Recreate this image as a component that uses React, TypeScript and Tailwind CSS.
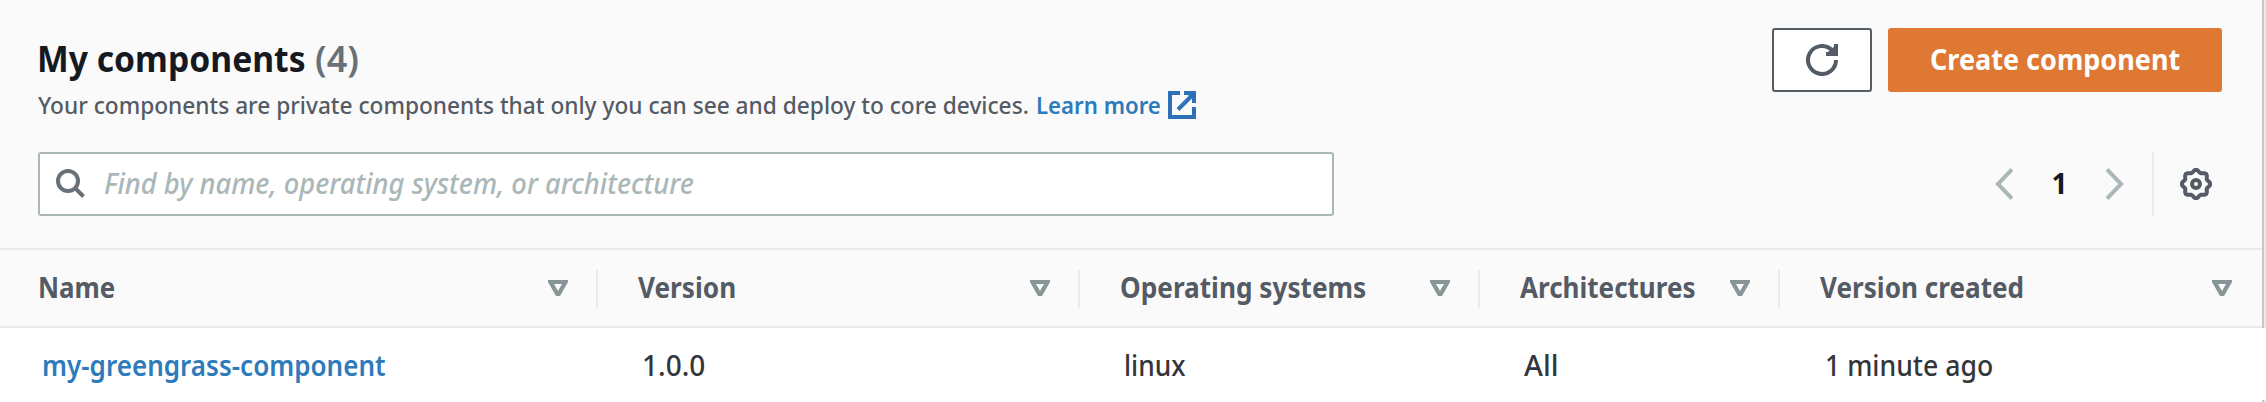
type Column = {
  label: string;
  value: string;
  cell: string;
  labelClass: string;
  valueClass: string;
  iconClass: string;
  last?: boolean;
};

const columns: Column[] = [
  {
    label: "Name",
    value: "my-greengrass-component",
    cell: "w-[598px]",
    labelClass: "ml-[38px] scale-x-[.925]",
    valueClass: "ml-[42px] scale-x-[.93] font-semibold text-[#2e7bbb]",
    iconClass: "mr-[28px]",
  },
  {
    label: "Version",
    value: "1.0.0",
    cell: "w-[482px]",
    labelClass: "ml-[40px] scale-x-[.935]",
    valueClass: "ml-[44px] font-medium text-[#33363b]",
    iconClass: "mr-[28px]",
  },
  {
    label: "Operating systems",
    value: "linux",
    cell: "w-[400px]",
    labelClass: "ml-[40px] scale-x-[.935]",
    valueClass: "ml-[44px] scale-x-[.94] font-medium text-[#33363b]",
    iconClass: "mr-[28px]",
  },
  {
    label: "Architectures",
    value: "All",
    cell: "w-[300px]",
    labelClass: "ml-[40px] scale-x-[.93]",
    valueClass: "ml-[44px] scale-x-[1.03] font-medium text-[#33363b]",
    iconClass: "mr-[28px]",
  },
  {
    label: "Version created",
    value: "1 minute ago",
    cell: "w-[482px]",
    labelClass: "ml-[40px] scale-x-[.933]",
    valueClass: "ml-[45px] scale-x-[.95] font-medium text-[#33363b]",
    iconClass: "mr-[30px]",
    last: true,
  },
];

function gearOutline() {
  const points: string[] = [];
  for (let i = 0; i < 144; i++) {
    const a = (i / 144) * Math.PI * 2;
    const r = 13 + 1.2 * Math.cos(8 * a);
    points.push(`${(16 + r * Math.cos(a)).toFixed(2)},${(16 + r * Math.sin(a)).toFixed(2)}`);
  }
  return points.join(" ");
}

function SearchIcon() {
  return (
    <svg className="h-[30px] w-[30px] shrink-0" viewBox="0 0 30 30" fill="none" stroke="#687078" strokeWidth="4">
      <circle cx="12" cy="12" r="10" />
      <path d="M19 19L27.5 27.5" />
    </svg>
  );
}

function RefreshIcon() {
  return (
    <svg className="h-8 w-8" viewBox="0 0 32 32" fill="none" stroke="#545b64" strokeWidth="4">
      <path d="M30 16a14 14 0 1 1-4.1-9.9L28 9" />
      <path d="M20 10h10V0" />
      <path d="M22 8L30 1V10H22Z" fill="#545b64" stroke="none" />
    </svg>
  );
}

function ExternalIcon() {
  return (
    <svg className="h-7 w-7 shrink-0" viewBox="0 0 28 28" fill="none" stroke="#2d72b8" strokeWidth="4">
      <path d="M12 2H2V26H26V16" />
      <path d="M16 2H26V12" />
      <path d="M10 18.5L25 3.5" />
      <path d="M19 3H25V9Z" fill="#2d72b8" stroke="none" />
    </svg>
  );
}

function SettingsIcon() {
  return (
    <svg className="h-8 w-8 shrink-0" viewBox="0 0 32 32" fill="none" stroke="#545b64" strokeWidth="4">
      <polygon points={gearOutline()} strokeLinejoin="round" />
      <circle cx="16" cy="16" r="4" />
    </svg>
  );
}

function Chevron({ flip = false }: { flip?: boolean }) {
  return (
    <svg
      className={flip ? "h-8 w-[18px] shrink-0 -scale-x-100" : "h-8 w-[18px] shrink-0"}
      viewBox="0 0 18 32"
      fill="none"
      stroke="#aab7b8"
      strokeWidth="4"
    >
      <path d="M17 1.5L3 16L17 30.5" />
    </svg>
  );
}

function SortIcon({ className }: { className: string }) {
  return (
    <svg className={`h-4 w-5 shrink-0 ${className}`} viewBox="0 0 20 16">
      <path fill="#879596" fillRule="evenodd" d="M0 0H20V2L12 16H8L0 2ZM6 4L10 11L14 4Z" />
    </svg>
  );
}

export default function App() {
  return (
    <div className="flex h-[402px] w-[2266px] flex-col overflow-hidden whitespace-nowrap bg-white font-['Noto_Sans','Open_Sans',sans-serif]">
      <div className="flex h-[328px] bg-[#fafafa]">
        <div className="flex w-[2262px] flex-col">
          <div className="flex h-[248px] flex-col">
            <div className="flex h-[152px] justify-between pr-10">
              <div className="flex flex-col pt-[37px]">
                <h2 className="flex h-11 items-center text-[36px] leading-[44px]">
                  <span className="ml-[37px] w-[278px] origin-left scale-x-[.935] font-bold text-[#16191f]">My components</span>
                  <span className="origin-left font-semibold text-[#687078]">(4)</span>
                </h2>
                <p className="mt-2 flex h-8 items-center text-2xl leading-8">
                  <span className="ml-[38px] w-[998px] origin-left scale-x-[.945] font-medium text-[#545b64]">
                    Your components are private components that only you can see and deploy to core devices.
                  </span>
                  <a className="flex items-center text-[#2e7bbb]">
                    <span className="w-[132px] origin-left scale-x-[.925] font-semibold">Learn more</span>
                    <ExternalIcon />
                  </a>
                </p>
              </div>
              <div className="flex gap-4 pt-7">
                <button className="flex h-16 w-[100px] items-center justify-center rounded-[3px] border-2 border-[#545b64] bg-white">
                  <RefreshIcon />
                </button>
                <button className="flex h-16 w-[334px] items-center rounded-[3px] bg-[#df7833] pb-[2px] pl-[42px] text-[28px] font-bold text-white">
                  <span className="origin-left scale-x-[.965]">Create component</span>
                </button>
              </div>
            </div>
            <div className="flex h-16 items-center justify-between pl-[38px] pr-[50px]">
              <div className="flex h-16 w-[1296px] items-center rounded-[3px] border-2 border-[#aab7b8] bg-white pl-4">
                <SearchIcon />
                <span className="ml-[18px] origin-left scale-x-[.975] pb-[2px] text-[28px] font-medium italic text-[#aab7b8]">
                  Find by name, operating system, or architecture
                </span>
              </div>
              <div className="flex h-16 items-center">
                <Chevron />
                <span className="w-[93px] pb-[2px] text-center text-[28px] font-bold text-[#16191f]">1</span>
                <Chevron flip />
                <div className="ml-7 mr-[26px] h-16 w-[2px] bg-[#eaeaea]" />
                <SettingsIcon />
              </div>
            </div>
          </div>
          <div className="flex h-20 border-y-2 border-[#eaeaea]">
            {columns.map((c) => (
              <div key={c.label} className={`flex shrink-0 items-center justify-between ${c.cell}`}>
                <span className={`origin-left pb-[2px] text-[28px] font-bold text-[#545b64] ${c.labelClass}`}>{c.label}</span>
                <div className="flex items-center">
                  <SortIcon className={c.iconClass} />
                  {!c.last && <div className="mt-[2px] h-[38px] w-[2px] bg-[#eaeaea]" />}
                </div>
              </div>
            ))}
          </div>
        </div>
        <div className="w-[2px] bg-[#c3c9ca]" />
        <div className="w-[2px] bg-[#e9ebeb]" />
      </div>
      <div className="flex h-[72px] items-center">
        {columns.map((c) => (
          <div key={c.label} className={`flex shrink-0 pt-[2px] ${c.cell}`}>
            <span className={`origin-left text-[28px] ${c.valueClass}`}>{c.value}</span>
          </div>
        ))}
      </div>
      <div className="flex h-[2px] justify-end">
        <div className="w-[2px] bg-[#c3c9ca]" />
        <div className="w-[2px] bg-[#e9ebeb]" />
      </div>
    </div>
  );
}
